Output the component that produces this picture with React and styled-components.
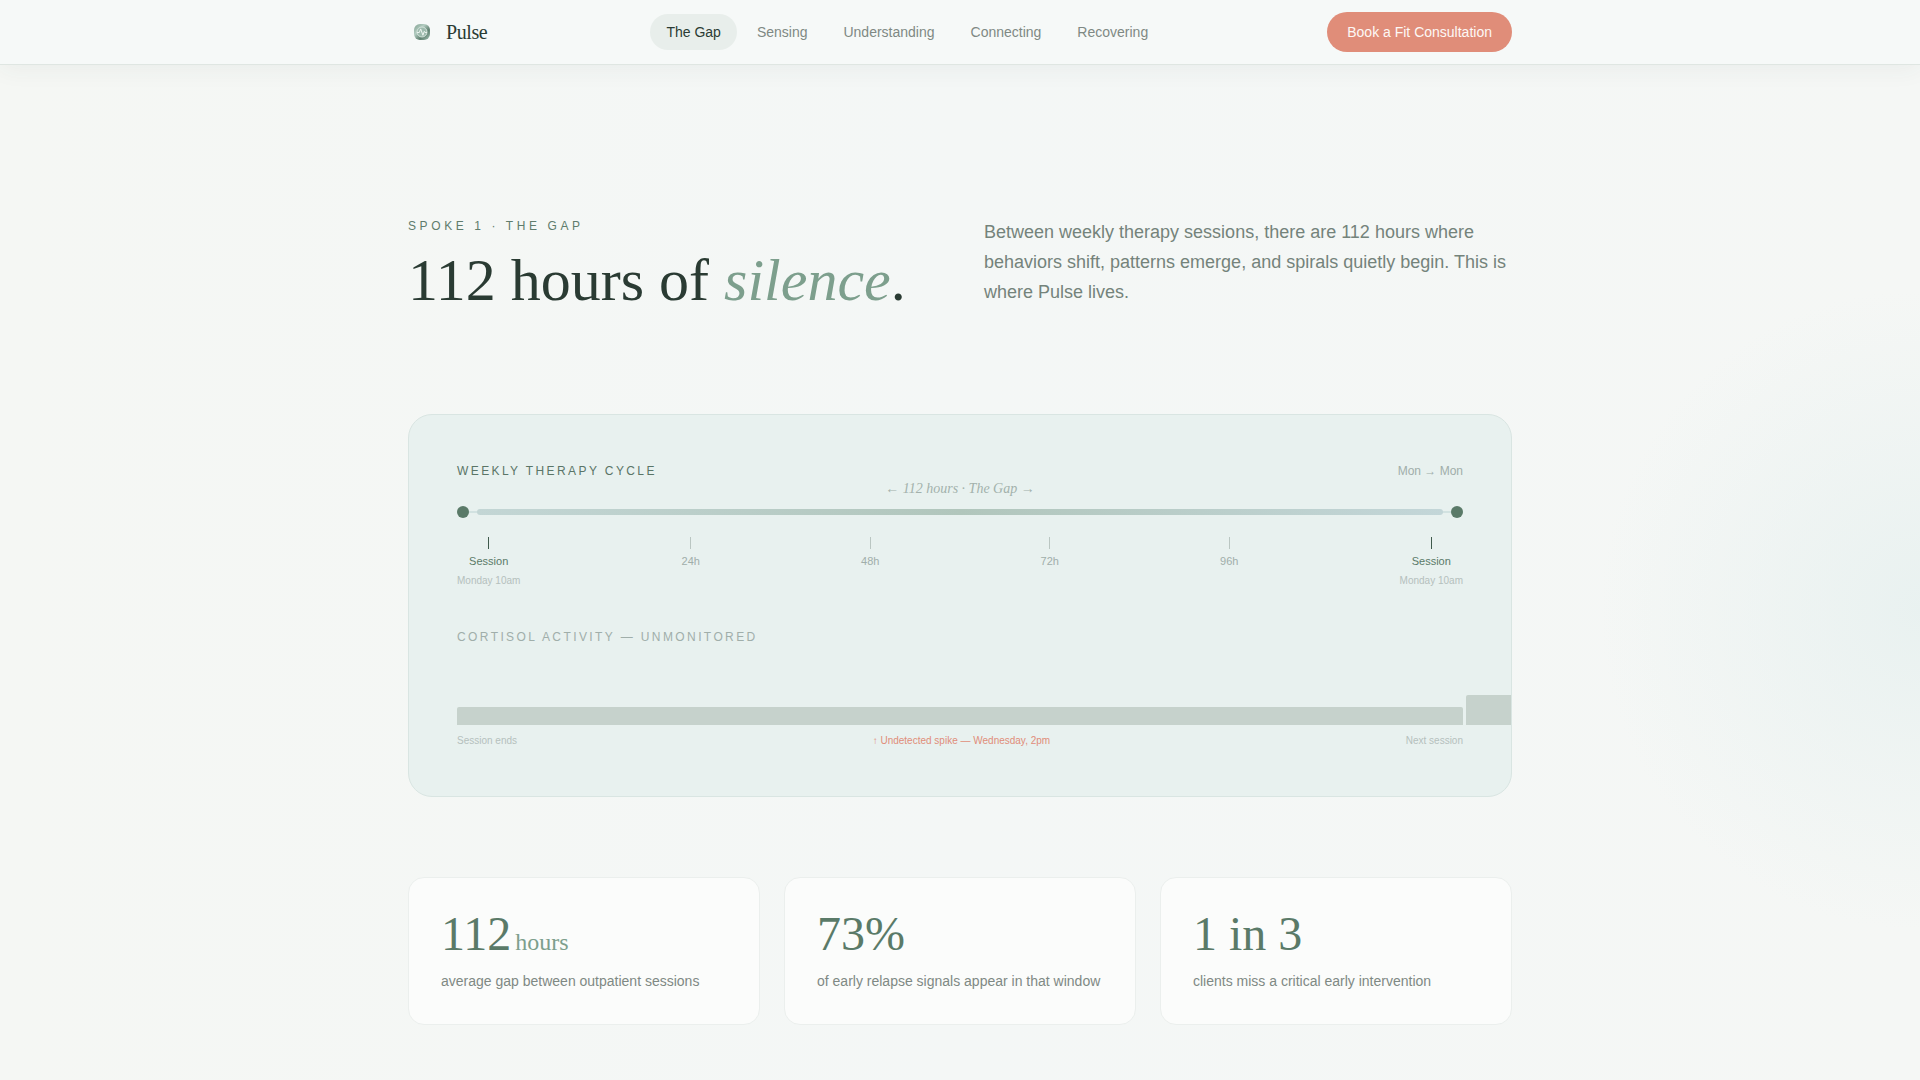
import React from "react";
import styled, { createGlobalStyle } from "styled-components";

const sans = '"Liberation Sans", Arial, sans-serif';
const serif = '"Liberation Serif", "Times New Roman", serif';

const GlobalStyle = createGlobalStyle`
  *, *::before, *::after { box-sizing: border-box; }
  body {
    margin: 0;
    background: #f5f7f5;
    color: #2a3b33;
    font-family: ${sans};
  }
  h1, h2, p, dl, dd, dt, ul { margin: 0; padding: 0; }
`;

const Page = styled.div`
  min-height: 100vh;
  background:
    radial-gradient(circle 320px at 100% 610px, rgba(230, 240, 239, 0.8), rgba(230, 240, 239, 0)),
    linear-gradient(90deg, #f5f7f4 0%, #f4f7f6 50%, #f5f7f5 100%);
`;

const Header = styled.header`
  position: sticky;
  top: 0;
  z-index: 10;
  background: #f6f9f8;
  border-bottom: 1px solid #dfe6e2;
  box-shadow: 0 4px 24px rgba(45, 74, 62, 0.06);
`;

const HeaderInner = styled.div`
  max-width: 1200px;
  height: 64px;
  margin: 0 auto;
  padding: 0 48px;
  display: flex;
  align-items: center;
  justify-content: space-between;
`;

const Brand = styled.a`
  display: flex;
  align-items: center;
  gap: 10px;
  color: #2a3b33;
  font-family: ${serif};
  font-size: 20px;
  line-height: 24px;
  letter-spacing: -0.02em;
  text-decoration: none;
`;

const Nav = styled.nav`
  display: flex;
  gap: 4px;
`;

const NavLink = styled.a`
  padding: 8px 16px;
  border-radius: 18px;
  background: ${(p) => (p.$active ? "#e8eeeb" : "transparent")};
  color: ${(p) => (p.$active ? "#2a3b33" : "#7f8984")};
  font-size: 14px;
  line-height: 20px;
  text-decoration: none;
`;

const BookButton = styled.button`
  padding: 10px 20px;
  border: 0;
  border-radius: 20px;
  background: #e08d79;
  color: #fdf8f5;
  font-family: ${sans};
  font-size: 14px;
  line-height: 20px;
  cursor: pointer;
`;

const Main = styled.main`
  max-width: 1200px;
  margin: 0 auto;
  padding: 152px 48px 48px;
`;

const Hero = styled.section`
  display: grid;
  grid-template-columns: 1fr 1fr;
  gap: 48px;
  align-items: start;
  padding-bottom: 100px;
`;

const Eyebrow = styled.p`
  margin-bottom: 12px;
  color: #5f7c6c;
  font-size: 12px;
  line-height: 18px;
  letter-spacing: 0.3em;
  text-transform: uppercase;
`;

const Title = styled.h1`
  font-family: ${serif};
  font-size: 60px;
  font-weight: 400;
  line-height: 67px;
  white-space: nowrap;

  em { color: #7d9f8d; }
`;

const Lead = styled.p`
  color: #74837b;
  font-size: 18px;
  line-height: 30px;
`;

const CycleCard = styled.section`
  overflow: hidden;
  padding: 48px;
  border: 1px solid #d9e5e2;
  border-radius: 24px;
  background: #e8f1ef;
`;

const CardHead = styled.div`
  display: flex;
  justify-content: space-between;
  margin-bottom: 24px;
  font-size: 12px;
  line-height: 16px;
`;

const Overline = styled.h2`
  color: ${(p) => (p.$muted ? "#a0aeaa" : "#5a7567")};
  font-size: 12px;
  font-weight: 400;
  line-height: 16px;
  letter-spacing: 0.2em;
  text-transform: uppercase;
`;

const Range = styled.span`
  color: #a0aeaa;
`;

const Track = styled.div`
  position: relative;
  height: 18px;
  display: flex;
  align-items: center;
`;

const Dot = styled.span`
  width: 12px;
  height: 12px;
  border-radius: 50%;
  background: #5a7a68;
`;

const Rail = styled.span`
  flex: 1;
  display: flex;
  align-items: center;
  height: 2px;
  padding: 0 8px;
  background: #d2e2e1;
`;

const GapBar = styled.span`
  flex: 1;
  height: 6px;
  border-radius: 3px;
  background: linear-gradient(90deg, #c3d6d5, #b1c6bc, #c3d6d8);
`;

const GapLabel = styled.span`
  position: absolute;
  left: 0;
  right: 0;
  bottom: 24px;
  color: #a3b1ac;
  font-family: ${serif};
  font-size: 14px;
  font-style: italic;
  line-height: 16px;
  text-align: center;
`;

const Ticks = styled.div`
  display: flex;
  justify-content: space-between;
  margin: 16px 0 40px;
`;

const Tick = styled.div`
  display: flex;
  flex-direction: column;
  align-items: center;
  gap: 4px;
  color: ${(p) => (p.$anchor ? "#5a7a68" : "#a0aeaa")};
  font-size: 11px;
  line-height: 16px;

  &::before {
    content: "";
    width: 1px;
    height: 12px;
    background: ${(p) => (p.$anchor ? "#3f5a4c" : "#bac6c2")};
  }

  small {
    color: #b5c0bd;
    font-size: 10px;
  }
`;

const Bars = styled.div`
  display: flex;
  align-items: flex-end;
  gap: 3px;
  height: 60px;
  margin: 20px 0 8px;
`;

const Bar = styled.span`
  flex: 0 0 100%;
  height: ${(p) => p.$height}px;
  border-radius: 2px 2px 0 0;
  background: #c6d2cc;
`;

const BarLabels = styled.div`
  display: flex;
  justify-content: space-between;
  color: #b5c0bd;
  font-size: 10px;
  line-height: 15px;
`;

const Spike = styled.span`
  color: #e08d79;
`;

const Stats = styled.dl`
  display: grid;
  grid-template-columns: repeat(3, 1fr);
  gap: 24px;
  margin-top: 80px;
`;

const Stat = styled.div`
  display: flex;
  flex-direction: column-reverse;
  justify-content: flex-end;
  gap: 12px;
  padding: 32px;
  border: 1px solid #ebefed;
  border-radius: 16px;
  background: #fbfcfb;
`;

const StatValue = styled.dd`
  color: #5a7a68;
  font-family: ${serif};
  font-size: 48px;
  line-height: 48px;

  small {
    margin-left: 4px;
    color: #7d9f8d;
    font-size: 24px;
    line-height: 24px;
  }
`;

const StatLabel = styled.dt`
  color: #7f8984;
  font-size: 14px;
  line-height: 22px;
`;

const Logo = () => (
  <svg width="28" height="28" viewBox="0 0 28 28" aria-hidden="true">
    <defs>
      <linearGradient id="mark" x1="0" y1="0" x2="1" y2="1">
        <stop offset="0" stopColor="#7fa08f" />
        <stop offset="0.35" stopColor="#b4cdc2" />
        <stop offset="0.65" stopColor="#5f8070" />
        <stop offset="1" stopColor="#a3bfb3" />
      </linearGradient>
    </defs>
    <rect x="6" y="6" width="16" height="16" rx="6" fill="url(#mark)" />
    <circle cx="14" cy="14" r="5" fill="#9dbaad" stroke="#d3e3db" strokeWidth="1" />
    <path d="M9.5 14.5h1.8l1.4-3.6 2.2 6.4 1.4-4 .8 1.2h1.4" fill="none" stroke="#eef5f1" strokeWidth="1" strokeLinecap="round" strokeLinejoin="round" />
  </svg>
);

const links = ["The Gap", "Sensing", "Understanding", "Connecting", "Recovering"];

const ticks = [
  { label: "Session", note: "Monday 10am" },
  { label: "24h" },
  { label: "48h" },
  { label: "72h" },
  { label: "96h" },
  { label: "Session", note: "Monday 10am" },
];

const bars = [18, 30];

const stats = [
  { value: "112", unit: "hours", label: "average gap between outpatient sessions" },
  { value: "73%", label: "of early relapse signals appear in that window" },
  { value: "1 in 3", label: "clients miss a critical early intervention" },
];

export default function App() {
  return (
    <Page>
      <GlobalStyle />
      <Header>
        <HeaderInner>
          <Brand href="#top"><Logo />Pulse</Brand>
          <Nav>
            {links.map((l, i) => (
              <NavLink key={l} href={`#spoke-${i + 1}`} $active={i === 0}>{l}</NavLink>
            ))}
          </Nav>
          <BookButton type="button">Book a Fit Consultation</BookButton>
        </HeaderInner>
      </Header>
      <Main>
        <Hero>
          <div>
            <Eyebrow>Spoke 1 · The Gap</Eyebrow>
            <Title>112 hours of <em>silence</em>.</Title>
          </div>
          <Lead>
            Between weekly therapy sessions, there are 112 hours where behaviors shift,
            patterns emerge, and spirals quietly begin. This is where Pulse lives.
          </Lead>
        </Hero>
        <CycleCard>
          <CardHead>
            <Overline>Weekly Therapy Cycle</Overline>
            <Range>Mon → Mon</Range>
          </CardHead>
          <Track>
            <Dot />
            <Rail><GapBar /></Rail>
            <Dot />
            <GapLabel>← 112 hours · The Gap →</GapLabel>
          </Track>
          <Ticks>
            {ticks.map((t, i) => (
              <Tick key={i} $anchor={Boolean(t.note)}>
                <span>{t.label}</span>
                {t.note && <small>{t.note}</small>}
              </Tick>
            ))}
          </Ticks>
          <Overline $muted>Cortisol Activity — Unmonitored</Overline>
          <Bars>
            {bars.map((h) => <Bar key={h} $height={h} />)}
          </Bars>
          <BarLabels>
            <span>Session ends</span>
            <Spike>↑ Undetected spike — Wednesday, 2pm</Spike>
            <span>Next session</span>
          </BarLabels>
        </CycleCard>
        <Stats>
          {stats.map((s) => (
            <Stat key={s.value}>
              <StatLabel>{s.label}</StatLabel>
              <StatValue>{s.value}{s.unit && <small>{s.unit}</small>}</StatValue>
            </Stat>
          ))}
        </Stats>
      </Main>
    </Page>
  );
}
